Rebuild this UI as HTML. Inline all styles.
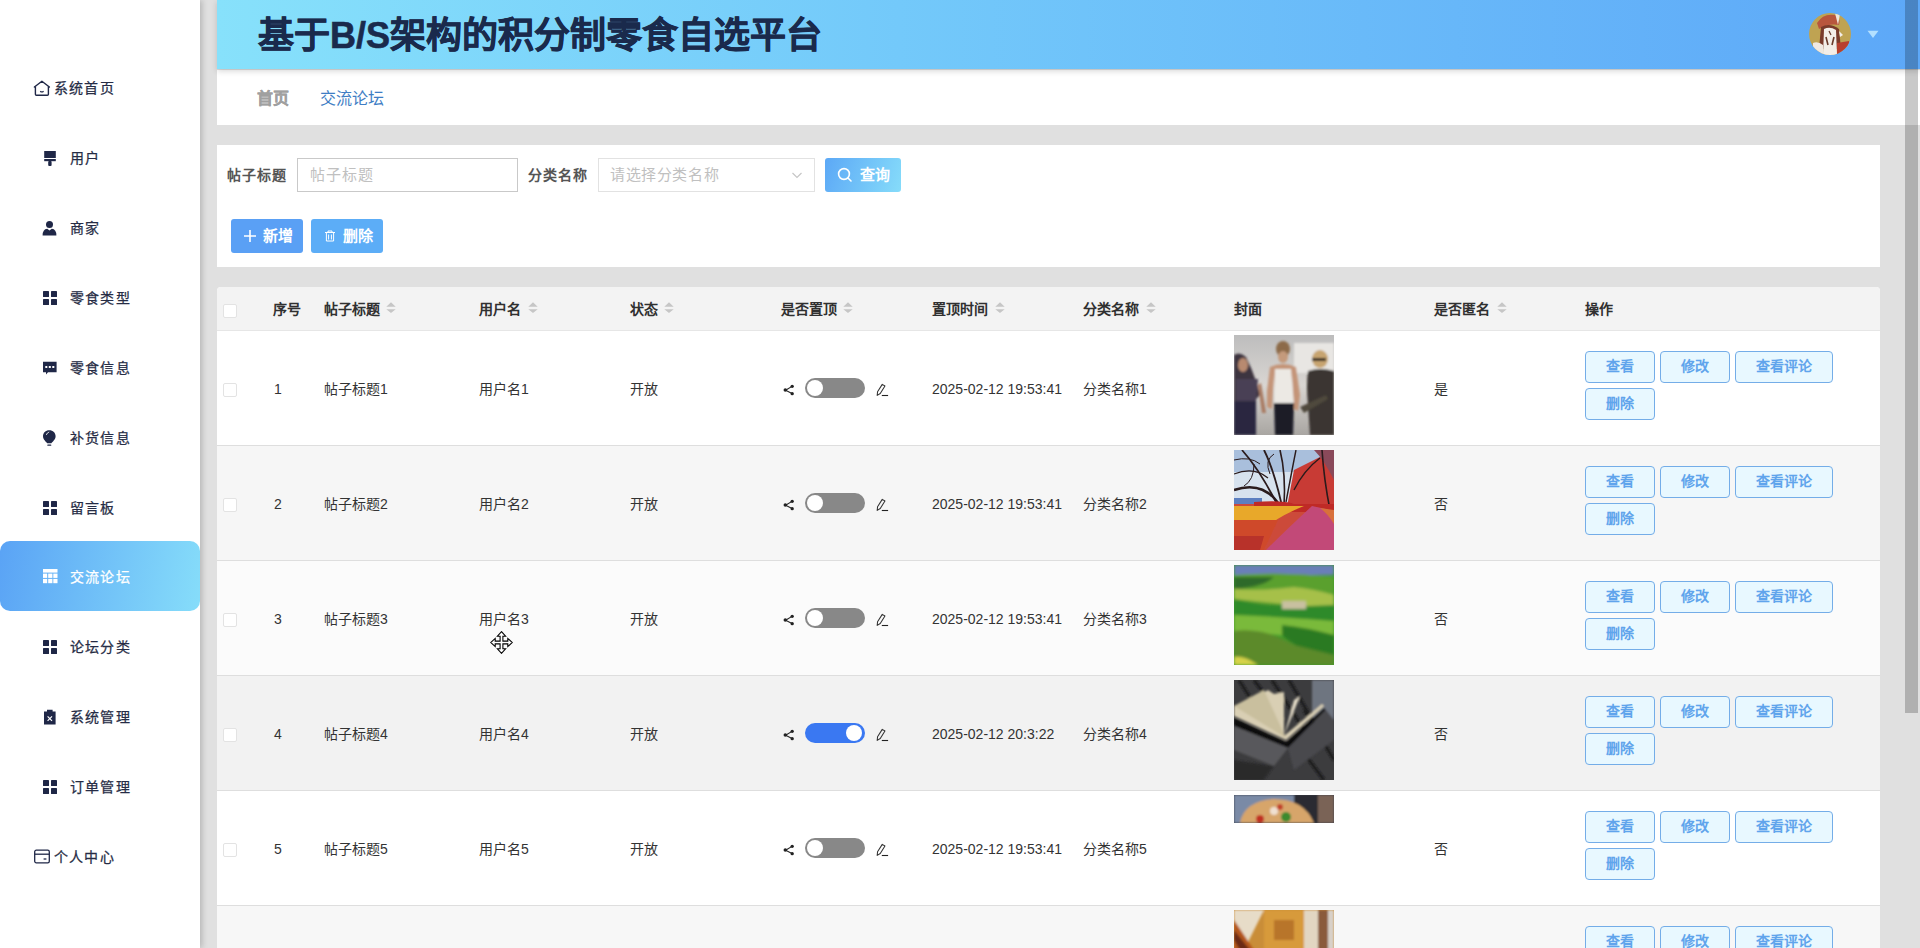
<!DOCTYPE html>
<html lang="zh-CN"><head><meta charset="utf-8">
<style>
*{box-sizing:border-box;margin:0;padding:0}
html,body{width:1920px;height:948px;overflow:hidden}
body{background:#e0e0e0;font-family:"Liberation Sans",sans-serif;position:relative;color:#333}
.abs{position:absolute}
#side{left:0;top:0;width:200px;height:948px;background:#fff;box-shadow:2px 0 6px rgba(0,0,0,.2)}
.mi{position:absolute;left:0;width:200px;height:70px}
.mi .t{position:absolute;left:70px;top:0;line-height:70px;font-size:14px;letter-spacing:1.2px;color:#262c45;white-space:nowrap;-webkit-text-stroke:.25px #262c45}
.mi svg{position:absolute}
.mi.on{background:linear-gradient(100deg,#5aa3f5 0%,#86ddfa 100%);border-radius:10px}
.mi.on .t{color:#fff;-webkit-text-stroke:.25px #fff}
#hdr{left:217px;top:0;width:1703px;height:69px;background:linear-gradient(90deg,#87e1fb 0%,#73c9fa 40%,#5da8f8 100%);box-shadow:0 2px 6px rgba(0,0,0,.17)}
#title{left:258px;top:2px;line-height:68px;font-size:36px;font-weight:bold;color:#1a2a4c;white-space:nowrap;-webkit-text-stroke:.6px #1a2a4c}
#bc{left:217px;top:70px;width:1703px;height:55px;background:#fff}
.panel{background:#fff}
.mi.on .t{top:1px}
.lbl{position:absolute;font-size:14px;letter-spacing:1px;color:#555;font-weight:bold;white-space:nowrap;line-height:20px}
.inp{position:absolute;background:#fff;border:1px solid #c9c9c9;height:34px}
.ph{position:absolute;font-size:15px;letter-spacing:1.1px;color:#c0c0c0;white-space:nowrap;line-height:20px}
.btn{position:absolute;color:#fff;font-size:14px;font-weight:bold;border-radius:3px;white-space:nowrap}
.btn span{position:absolute;line-height:20px}
.th{position:absolute;top:299px;font-size:14px;font-weight:bold;color:#303030;line-height:20px;white-space:nowrap}
.sort{position:absolute;top:302px}
.row{position:absolute;left:217px;width:1663px;height:115px;border-bottom:1px solid #dedede}
.td{position:absolute;font-size:14px;color:#333;line-height:20px;white-space:nowrap;top:48px}
.cb{position:absolute;left:6px;width:14px;height:14px;border:1px solid #e3e3e3;border-radius:2px;background:#fff}
.ob{position:absolute;height:32px;border:1px solid #74ade8;border-radius:4px;background:#e8f8ff;color:#60a4ec;font-size:14px;font-weight:bold;text-align:center;line-height:29px;white-space:nowrap}
.sw{position:absolute;left:588px;top:47px;width:60px;height:20px;border-radius:10px;background:#888}
.sw i{position:absolute;left:2px;top:2px;width:16px;height:16px;border-radius:50%;background:#fff}
.sw.onn{background:#3a78f2}
.sw.onn i{left:41px}
.img{position:absolute;left:1017px;top:4px;width:100px;height:100px;overflow:hidden}


</style></head><body>
<div id="side" class="abs">
<div class="mi" style="top:53px"><svg style="left:32px;top:27px" width="20" height="20" viewBox="0 0 20 20"><path d="M2.4 7 L9.9 1.2 L17.4 7" fill="none" stroke="#1f2747" stroke-width="1.4" stroke-linejoin="round" stroke-linecap="round"/><path d="M3.4 6.4 V14.2 Q3.4 15.2 4.4 15.2 H15.4 Q16.4 15.2 16.4 14.2 V6.4" fill="none" stroke="#1f2747" stroke-width="1.4"/><path d="M8.2 11.2 Q9.9 12.6 11.6 11.2" fill="none" stroke="#1f2747" stroke-width="1.2"/></svg><span class="t" style="left:54px">系统首页</span></div>
<div class="mi" style="top:123px"><svg style="left:44px;top:28px" width="12" height="16" viewBox="0 0 12 16"><rect x="0.2" y="0" width="11.6" height="7" fill="#1f2747"/><rect x="0.2" y="8" width="11.6" height="2.2" fill="#1f2747"/><rect x="4.2" y="10" width="3.4" height="5" rx="1" fill="#1f2747"/></svg><span class="t" style="left:70px">用户</span></div>
<div class="mi" style="top:193px"><svg style="left:42px;top:28px" width="15" height="15" viewBox="0 0 15 15"><circle cx="7.5" cy="3.6" r="3.5" fill="#1f2747"/><path d="M0.6 14.6 Q0.6 8.2 5.2 7.8 L7.5 9.4 L9.8 7.8 Q14.4 8.2 14.4 14.6 Z" fill="#1f2747"/></svg><span class="t" style="left:70px">商家</span></div>
<div class="mi" style="top:263px"><svg style="left:43px;top:28px" width="14" height="14" viewBox="0 0 14 14" fill="#1f2747"><rect x="0" y="0" width="6" height="6" rx=".6"/><rect x="8" y="0" width="6" height="6" rx=".6"/><rect x="0" y="8" width="6" height="6" rx=".6"/><rect x="8" y="8" width="6" height="6" rx=".6"/></svg><span class="t" style="left:70px">零食类型</span></div>
<div class="mi" style="top:333px"><svg style="left:43px;top:28px" width="14" height="14" viewBox="0 0 14 14"><path d="M0 0.8 H13.6 V11.2 H5 L3 13.4 V11.2 H0 Z" fill="#1f2747"/><rect x="2.3" y="5" width="2" height="2" fill="#fff"/><rect x="5.8" y="5" width="2" height="2" fill="#fff"/><rect x="9.3" y="5" width="2" height="2" fill="#fff"/></svg><span class="t" style="left:70px">零食信息</span></div>
<div class="mi" style="top:403px"><svg style="left:43px;top:27px" width="13" height="16" viewBox="0 0 13 16"><path d="M6.3 0.2 C10 0.2 12.6 2.8 12.6 6.2 C12.6 9.4 9.6 11.6 8.4 13.2 H4.2 C3 11.6 0 9.4 0 6.2 C0 2.8 2.6 0.2 6.3 0.2 Z" fill="#1f2747"/><path d="M3.3 5 Q4 2.6 6.2 2" fill="none" stroke="#fff" stroke-width=".8"/><rect x="4.3" y="14.4" width="4" height="1.4" rx=".6" fill="#1f2747"/></svg><span class="t" style="left:70px">补货信息</span></div>
<div class="mi" style="top:473px"><svg style="left:43px;top:28px" width="14" height="14" viewBox="0 0 14 14" fill="#1f2747"><rect x="0" y="0" width="6" height="6" rx=".6"/><rect x="8" y="0" width="6" height="6" rx=".6"/><rect x="0" y="8" width="6" height="6" rx=".6"/><rect x="8" y="8" width="6" height="6" rx=".6"/></svg><span class="t" style="left:70px">留言板</span></div>
<div class="mi on" style="top:541px;padding-top:1px"><svg style="left:43px;top:28px" width="15" height="15" viewBox="0 0 15 15" fill="#fff"><rect x="0" y="0" width="14.5" height="3.6"/><rect x="0" y="4.6" width="4.2" height="4.3"/><rect x="5.2" y="4.6" width="4.2" height="4.3"/><rect x="10.3" y="4.6" width="4.2" height="4.3"/><rect x="0" y="9.9" width="4.2" height="4.3"/><rect x="5.2" y="9.9" width="4.2" height="4.3"/><rect x="10.3" y="9.9" width="4.2" height="4.3"/></svg><span class="t" style="left:70px">交流论坛</span></div>
<div class="mi" style="top:612px"><svg style="left:43px;top:28px" width="14" height="14" viewBox="0 0 14 14" fill="#1f2747"><rect x="0" y="0" width="6" height="6" rx=".6"/><rect x="8" y="0" width="6" height="6" rx=".6"/><rect x="0" y="8" width="6" height="6" rx=".6"/><rect x="8" y="8" width="6" height="6" rx=".6"/></svg><span class="t" style="left:70px">论坛分类</span></div>
<div class="mi" style="top:682px"><svg style="left:43px;top:27px" width="14" height="16" viewBox="0 0 14 16"><path d="M1 2.4 H4 V0.8 H9.6 V2.4 H12.6 V15.4 H1 Z" fill="#1f2747"/><path d="M4.6 7.4 L9 11.8 M9 7.4 L4.6 11.8" stroke="#fff" stroke-width="1.2"/></svg><span class="t" style="left:70px">系统管理</span></div>
<div class="mi" style="top:752px"><svg style="left:43px;top:28px" width="14" height="14" viewBox="0 0 14 14" fill="#1f2747"><rect x="0" y="0" width="6" height="6" rx=".6"/><rect x="8" y="0" width="6" height="6" rx=".6"/><rect x="0" y="8" width="6" height="6" rx=".6"/><rect x="8" y="8" width="6" height="6" rx=".6"/></svg><span class="t" style="left:70px">订单管理</span></div>
<div class="mi" style="top:822px"><svg style="left:32px;top:26px" width="19" height="17" viewBox="0 0 19 17"><rect x="2.7" y="2.2" width="14.6" height="12.6" rx="1.6" fill="none" stroke="#1f2747" stroke-width="1.3"/><path d="M2.7 6.2 H17.3" stroke="#1f2747" stroke-width="1.3"/><path d="M11.6 11 H14.4" stroke="#1f2747" stroke-width="1.3"/></svg><span class="t" style="left:54px">个人中心</span></div>
</div>
<div id="bc" class="abs"></div>
<div id="hdr" class="abs"></div>
<div id="title" class="abs">基于B/S架构的积分制零食自选平台</div>
<div class="abs panel" style="left:217px;top:145px;width:1663px;height:122px"></div>
<div class="abs panel" style="left:217px;top:287px;width:1663px;height:661px;border-radius:4px 4px 0 0"></div>
<div class="abs" style="left:217px;top:287px;width:1663px;height:44px;background:#f3f3f3;border-bottom:1px solid #e6e6e6;border-radius:4px 4px 0 0"></div>
<div class="cb" style="left:223px;top:304px"></div>
<div class="th" style="left:273px">序号</div>
<div class="th" style="left:324px">帖子标题</div>
<svg class="sort" style="left:386px" width="10" height="14" viewBox="0 0 10 14"><path d="M5 0.3 L9.7 4.7 H0.3 Z M5 10.9 L9.7 7.2 H0.3 Z" fill="#c6c6c6"/></svg>
<div class="th" style="left:479px">用户名</div>
<svg class="sort" style="left:528px" width="10" height="14" viewBox="0 0 10 14"><path d="M5 0.3 L9.7 4.7 H0.3 Z M5 10.9 L9.7 7.2 H0.3 Z" fill="#c6c6c6"/></svg>
<div class="th" style="left:630px">状态</div>
<svg class="sort" style="left:664px" width="10" height="14" viewBox="0 0 10 14"><path d="M5 0.3 L9.7 4.7 H0.3 Z M5 10.9 L9.7 7.2 H0.3 Z" fill="#c6c6c6"/></svg>
<div class="th" style="left:781px">是否置顶</div>
<svg class="sort" style="left:843px" width="10" height="14" viewBox="0 0 10 14"><path d="M5 0.3 L9.7 4.7 H0.3 Z M5 10.9 L9.7 7.2 H0.3 Z" fill="#c6c6c6"/></svg>
<div class="th" style="left:932px">置顶时间</div>
<svg class="sort" style="left:995px" width="10" height="14" viewBox="0 0 10 14"><path d="M5 0.3 L9.7 4.7 H0.3 Z M5 10.9 L9.7 7.2 H0.3 Z" fill="#c6c6c6"/></svg>
<div class="th" style="left:1083px">分类名称</div>
<svg class="sort" style="left:1146px" width="10" height="14" viewBox="0 0 10 14"><path d="M5 0.3 L9.7 4.7 H0.3 Z M5 10.9 L9.7 7.2 H0.3 Z" fill="#c6c6c6"/></svg>
<div class="th" style="left:1234px">封面</div>
<div class="th" style="left:1434px">是否匿名</div>
<svg class="sort" style="left:1497px" width="10" height="14" viewBox="0 0 10 14"><path d="M5 0.3 L9.7 4.7 H0.3 Z M5 10.9 L9.7 7.2 H0.3 Z" fill="#c6c6c6"/></svg>
<div class="th" style="left:1585px">操作</div>
<div class="row" style="top:331px;background:#ffffff"><div class="cb" style="top:52px"></div><div class="td" style="left:57px">1</div><div class="td" style="left:107px">帖子标题1</div><div class="td" style="left:262px">用户名1</div><div class="td" style="left:413px">开放</div><svg class="abs" style="left:566px;top:53px" width="12" height="12" viewBox="0 0 12 12"><path d="M9 2.4 L2.6 6.2 L9 9.6" fill="none" stroke="#222" stroke-width="1.1"/><circle cx="9.2" cy="2.3" r="1.65" fill="#222"/><circle cx="2.3" cy="6.1" r="1.75" fill="#222"/><circle cx="9.2" cy="9.7" r="1.65" fill="#222"/></svg><div class="sw"><i></i></div><svg class="abs" style="left:659px;top:52px" width="13" height="14" viewBox="0 0 13 14"><path d="M6.25 1.35 L8.95 3.05 L4.25 10.45 L1.2 12.4 L1.55 8.75 Z" fill="none" stroke="#333" stroke-width="1.05" stroke-linejoin="round"/><path d="M5.8 12.5 H12.1" stroke="#222" stroke-width="1.1"/></svg><div class="td" style="left:715px">2025-02-12 19:53:41</div><div class="td" style="left:866px">分类名称1</div><div class="img" id="img1"><svg width="100" height="100" viewBox="0 0 100 100"><defs><filter id="b1" x="-10%" y="-10%" width="120%" height="120%"><feGaussianBlur stdDeviation="1.2"/></filter>
<linearGradient id="g1" x1="0" y1="0" x2="0" y2="1"><stop offset="0" stop-color="#bdbdbd"/><stop offset=".5" stop-color="#d9d6d2"/><stop offset="1" stop-color="#a9a6a2"/></linearGradient></defs>
<rect width="100" height="100" fill="url(#g1)"/>
<g filter="url(#b1)">
<rect x="60" y="8" width="40" height="30" fill="#e8e6e3"/>
<path d="M0 20 Q6 16 12 22 Q18 34 22 46 L26 60 L22 64 L20 100 L0 100 Z" fill="#3e3540"/>
<ellipse cx="9" cy="30" rx="5" ry="7" fill="#b88a70"/>
<path d="M2 44 H24 L22 66 H2 Z" fill="#4a4155"/>
<path d="M0 66 H22 V100 H0 Z" fill="#2a2540"/>
<path d="M24 50 L28 78 L32 78 L27 48 Z" fill="#a97a62"/>
<ellipse cx="49" cy="14" rx="7" ry="8" fill="#8c6a48"/>
<ellipse cx="49" cy="22" rx="5" ry="6" fill="#c49a7c"/>
<path d="M36 32 Q49 26 62 32 L66 60 L64 76 L60 74 L58 40 L56 70 H42 L40 40 L38 74 L33 72 L33 56 Z" fill="#c49478"/>
<path d="M41 34 H57 L60 70 H40 Z" fill="#ece9e4"/>
<path d="M40 68 H60 L59 100 H41 Z" fill="#1e1e26"/>
<ellipse cx="86" cy="24" rx="8" ry="9" fill="#c7a470"/>
<rect x="78" y="23" width="14" height="3" fill="#222"/>
<path d="M74 36 Q86 32 100 36 V100 H76 L74 70 Q72 50 74 36 Z" fill="#3a3530"/>
<path d="M66 72 L92 60 L94 64 L70 78 Z" fill="#504a3e"/>
</g></svg></div><div class="td" style="left:1217px">是</div><div class="ob" style="left:1368px;top:20px;width:70px">查看</div><div class="ob" style="left:1443px;top:20px;width:70px">修改</div><div class="ob" style="left:1518px;top:20px;width:98px">查看评论</div><div class="ob" style="left:1368px;top:57px;width:70px">删除</div></div>
<div class="row" style="top:446px;background:#f6f6f6"><div class="cb" style="top:52px"></div><div class="td" style="left:57px">2</div><div class="td" style="left:107px">帖子标题2</div><div class="td" style="left:262px">用户名2</div><div class="td" style="left:413px">开放</div><svg class="abs" style="left:566px;top:53px" width="12" height="12" viewBox="0 0 12 12"><path d="M9 2.4 L2.6 6.2 L9 9.6" fill="none" stroke="#222" stroke-width="1.1"/><circle cx="9.2" cy="2.3" r="1.65" fill="#222"/><circle cx="2.3" cy="6.1" r="1.75" fill="#222"/><circle cx="9.2" cy="9.7" r="1.65" fill="#222"/></svg><div class="sw"><i></i></div><svg class="abs" style="left:659px;top:52px" width="13" height="14" viewBox="0 0 13 14"><path d="M6.25 1.35 L8.95 3.05 L4.25 10.45 L1.2 12.4 L1.55 8.75 Z" fill="none" stroke="#333" stroke-width="1.05" stroke-linejoin="round"/><path d="M5.8 12.5 H12.1" stroke="#222" stroke-width="1.1"/></svg><div class="td" style="left:715px">2025-02-12 19:53:41</div><div class="td" style="left:866px">分类名称2</div><div class="img" id="img2"><svg width="100" height="100" viewBox="0 0 100 100"><defs><filter id="b2"><feGaussianBlur stdDeviation=".6"/></filter></defs>
<rect width="100" height="100" fill="#d7e2ee"/><rect y="54" width="100" height="46" fill="#cc4a3a"/>
<g filter="url(#b2)">
<rect x="0" y="0" width="100" height="22" fill="#a9bfdc"/>
<path d="M60 20 Q80 10 100 0 V62 H52 Z" fill="#c83a34"/>
<path d="M80 0 H100 V30 Q90 10 80 0 Z" fill="#8a4a5a"/>
<g stroke="#2a1a1c" fill="none">
<path d="M46 56 Q30 30 0 40" stroke-width="2.4"/>
<path d="M44 56 Q26 20 8 0" stroke-width="1.8"/>
<path d="M48 56 Q40 20 30 0" stroke-width="1.8"/>
<path d="M50 56 Q52 24 46 0" stroke-width="1.6"/>
<path d="M52 52 Q58 20 62 0" stroke-width="1.4"/>
<path d="M0 24 Q20 16 34 28" stroke-width="1.2"/>
<path d="M0 10 Q16 6 26 14" stroke-width="1"/>
<path d="M10 36 Q20 30 20 14" stroke-width="1"/>
<path d="M36 24 Q30 10 40 4" stroke-width="1"/>
<path d="M60 40 Q70 20 86 8" stroke-width="1.4"/>
<path d="M88 0 Q90 30 96 60" stroke-width="1.6"/>
</g>
<rect x="0" y="48" width="28" height="6" fill="#5b7fc0"/>
<path d="M20 52 Q50 50 60 54 L100 54 V62 H20 Z" fill="#bf2a26"/>
<path d="M0 56 H70 Q50 64 36 74 H0 Z" fill="#e8a82c"/>
<path d="M0 70 H44 L30 100 H0 Z" fill="#cf4a2a"/>
<path d="M0 86 H30 L26 100 H0 Z" fill="#b8302a"/>
<path d="M78 56 Q90 58 100 62 V100 H32 Q52 80 78 56 Z" fill="#c24a78"/>
<path d="M86 58 L100 60 V74 Q94 64 86 58 Z" fill="#d8703a"/>
</g></svg></div><div class="td" style="left:1217px">否</div><div class="ob" style="left:1368px;top:20px;width:70px">查看</div><div class="ob" style="left:1443px;top:20px;width:70px">修改</div><div class="ob" style="left:1518px;top:20px;width:98px">查看评论</div><div class="ob" style="left:1368px;top:57px;width:70px">删除</div></div>
<div class="row" style="top:561px;background:#fbfbfb"><div class="cb" style="top:52px"></div><div class="td" style="left:57px">3</div><div class="td" style="left:107px">帖子标题3</div><div class="td" style="left:262px">用户名3</div><div class="td" style="left:413px">开放</div><svg class="abs" style="left:566px;top:53px" width="12" height="12" viewBox="0 0 12 12"><path d="M9 2.4 L2.6 6.2 L9 9.6" fill="none" stroke="#222" stroke-width="1.1"/><circle cx="9.2" cy="2.3" r="1.65" fill="#222"/><circle cx="2.3" cy="6.1" r="1.75" fill="#222"/><circle cx="9.2" cy="9.7" r="1.65" fill="#222"/></svg><div class="sw"><i></i></div><svg class="abs" style="left:659px;top:52px" width="13" height="14" viewBox="0 0 13 14"><path d="M6.25 1.35 L8.95 3.05 L4.25 10.45 L1.2 12.4 L1.55 8.75 Z" fill="none" stroke="#333" stroke-width="1.05" stroke-linejoin="round"/><path d="M5.8 12.5 H12.1" stroke="#222" stroke-width="1.1"/></svg><div class="td" style="left:715px">2025-02-12 19:53:41</div><div class="td" style="left:866px">分类名称3</div><div class="img" id="img3"><svg width="100" height="100" viewBox="0 0 100 100"><defs><filter id="b3"><feGaussianBlur stdDeviation="1.5"/></filter></defs>
<rect width="100" height="100" fill="#3f9a2a"/>
<g filter="url(#b3)">
<rect x="0" y="0" width="100" height="10" fill="#6a7fb8"/>
<path d="M0 10 Q50 6 100 12 V40 H0 Z" fill="#5aa02e"/>
<path d="M0 12 H40 Q30 22 0 24 Z" fill="#2d6b2a"/>
<path d="M0 24 Q30 26 60 22 Q80 24 100 30 V44 Q60 40 0 34 Z" fill="#a6c04a"/>
<path d="M0 34 Q40 44 100 40 V60 Q50 50 0 50 Z" fill="#2f8a2a"/>
<path d="M48 36 H72 V44 H48 Z" fill="#c8c0a0"/>
<path d="M0 50 Q50 52 100 56 V80 Q60 70 0 66 Z" fill="#7aba3a"/>
<path d="M48 60 Q70 62 100 70 V92 Q70 90 48 70 Z" fill="#2a7a22"/>
<path d="M0 66 Q30 62 60 80 L100 90 V100 H0 Z" fill="#5c8a2a"/>
<path d="M0 92 Q10 90 24 100 H0 Z" fill="#d6d24a"/>
</g></svg></div><div class="td" style="left:1217px">否</div><div class="ob" style="left:1368px;top:20px;width:70px">查看</div><div class="ob" style="left:1443px;top:20px;width:70px">修改</div><div class="ob" style="left:1518px;top:20px;width:98px">查看评论</div><div class="ob" style="left:1368px;top:57px;width:70px">删除</div></div>
<div class="row" style="top:676px;background:#f2f2f2"><div class="cb" style="top:52px"></div><div class="td" style="left:57px">4</div><div class="td" style="left:107px">帖子标题4</div><div class="td" style="left:262px">用户名4</div><div class="td" style="left:413px">开放</div><svg class="abs" style="left:566px;top:53px" width="12" height="12" viewBox="0 0 12 12"><path d="M9 2.4 L2.6 6.2 L9 9.6" fill="none" stroke="#222" stroke-width="1.1"/><circle cx="9.2" cy="2.3" r="1.65" fill="#222"/><circle cx="2.3" cy="6.1" r="1.75" fill="#222"/><circle cx="9.2" cy="9.7" r="1.65" fill="#222"/></svg><div class="sw onn"><i></i></div><svg class="abs" style="left:659px;top:52px" width="13" height="14" viewBox="0 0 13 14"><path d="M6.25 1.35 L8.95 3.05 L4.25 10.45 L1.2 12.4 L1.55 8.75 Z" fill="none" stroke="#333" stroke-width="1.05" stroke-linejoin="round"/><path d="M5.8 12.5 H12.1" stroke="#222" stroke-width="1.1"/></svg><div class="td" style="left:715px">2025-02-12 20:3:22</div><div class="td" style="left:866px">分类名称4</div><div class="img" id="img4"><svg width="100" height="100" viewBox="0 0 100 100"><defs><filter id="b4"><feGaussianBlur stdDeviation=".8"/></filter></defs>
<rect width="100" height="100" fill="#3c3c3e"/>
<g filter="url(#b4)">
<rect x="78" y="0" width="22" height="50" fill="#6e7480"/>
<path d="M5 0 L30 40 M20 0 L50 40 M38 0 L70 50 M55 0 L90 60 M70 30 L100 80 M60 60 L90 100" stroke="#1a1a1c" stroke-width="3" fill="none"/>
<path d="M0 36 L52 60 L90 26 L88 24 L50 56 L50 12 L40 14 L34 10 L20 18 L0 26 Z" fill="#d9cfb4"/>
<path d="M0 26 L30 10 L52 58 Z" fill="#c9bf9e"/>
<path d="M50 56 L60 20 L66 16 Z" fill="#e4dcc8"/>
<path d="M0 38 L52 62 L90 28 L92 30 L54 68 L0 46 Z" fill="#111"/>
<path d="M0 46 L54 68 L40 86 L0 70 Z" fill="#58585c"/>
<path d="M54 68 L92 30 L100 40 V60 L60 90 Z" fill="#49494d"/>
<path d="M0 80 L40 86 L30 100 H0 Z" fill="#2a2a2c"/>
</g></svg></div><div class="td" style="left:1217px">否</div><div class="ob" style="left:1368px;top:20px;width:70px">查看</div><div class="ob" style="left:1443px;top:20px;width:70px">修改</div><div class="ob" style="left:1518px;top:20px;width:98px">查看评论</div><div class="ob" style="left:1368px;top:57px;width:70px">删除</div></div>
<div class="row" style="top:791px;background:#ffffff"><div class="cb" style="top:52px"></div><div class="td" style="left:57px">5</div><div class="td" style="left:107px">帖子标题5</div><div class="td" style="left:262px">用户名5</div><div class="td" style="left:413px">开放</div><svg class="abs" style="left:566px;top:53px" width="12" height="12" viewBox="0 0 12 12"><path d="M9 2.4 L2.6 6.2 L9 9.6" fill="none" stroke="#222" stroke-width="1.1"/><circle cx="9.2" cy="2.3" r="1.65" fill="#222"/><circle cx="2.3" cy="6.1" r="1.75" fill="#222"/><circle cx="9.2" cy="9.7" r="1.65" fill="#222"/></svg><div class="sw"><i></i></div><svg class="abs" style="left:659px;top:52px" width="13" height="14" viewBox="0 0 13 14"><path d="M6.25 1.35 L8.95 3.05 L4.25 10.45 L1.2 12.4 L1.55 8.75 Z" fill="none" stroke="#333" stroke-width="1.05" stroke-linejoin="round"/><path d="M5.8 12.5 H12.1" stroke="#222" stroke-width="1.1"/></svg><div class="td" style="left:715px">2025-02-12 19:53:41</div><div class="td" style="left:866px">分类名称5</div><div class="img" id="img5"><svg width="100" height="100" viewBox="0 0 100 100"><defs><filter id="b5"><feGaussianBlur stdDeviation=".8"/></filter></defs>
<rect x="0" y="0" width="100" height="28" fill="#3a3f4a"/>
<g filter="url(#b5)">
<rect x="0" y="0" width="60" height="28" fill="#7a8aa6"/>
<rect x="60" y="0" width="24" height="28" fill="#2a2c30"/>
<rect x="84" y="0" width="16" height="28" fill="#7a6356"/>
<path d="M6 28 Q10 6 40 4 Q70 4 80 28 Z" fill="#d7a56a"/>
<circle cx="26" cy="24" r="4" fill="#c02e22"/>
<circle cx="52" cy="22" r="5" fill="#3c8a2e"/>
<circle cx="40" cy="16" r="4" fill="#f0e0d0"/>
<circle cx="46" cy="12" r="3" fill="#c2402a"/>
</g>
<rect x="0" y="28" width="100" height="72" fill="#ffffff"/></svg></div><div class="td" style="left:1217px">否</div><div class="ob" style="left:1368px;top:20px;width:70px">查看</div><div class="ob" style="left:1443px;top:20px;width:70px">修改</div><div class="ob" style="left:1518px;top:20px;width:98px">查看评论</div><div class="ob" style="left:1368px;top:57px;width:70px">删除</div></div>
<div class="row" style="top:906px;background:#f7f7f7"><div class="cb" style="top:52px"></div><div class="td" style="left:57px">6</div><div class="td" style="left:107px">帖子标题6</div><div class="td" style="left:262px">用户名6</div><div class="td" style="left:413px">开放</div><svg class="abs" style="left:566px;top:53px" width="12" height="12" viewBox="0 0 12 12"><path d="M9 2.4 L2.6 6.2 L9 9.6" fill="none" stroke="#222" stroke-width="1.1"/><circle cx="9.2" cy="2.3" r="1.65" fill="#222"/><circle cx="2.3" cy="6.1" r="1.75" fill="#222"/><circle cx="9.2" cy="9.7" r="1.65" fill="#222"/></svg><div class="sw"><i></i></div><svg class="abs" style="left:659px;top:52px" width="13" height="14" viewBox="0 0 13 14"><path d="M6.25 1.35 L8.95 3.05 L4.25 10.45 L1.2 12.4 L1.55 8.75 Z" fill="none" stroke="#333" stroke-width="1.05" stroke-linejoin="round"/><path d="M5.8 12.5 H12.1" stroke="#222" stroke-width="1.1"/></svg><div class="td" style="left:715px">2025-02-12 19:53:41</div><div class="td" style="left:866px">分类名称6</div><div class="img" id="img6"><svg width="100" height="100" viewBox="0 0 100 100"><defs><filter id="b6"><feGaussianBlur stdDeviation="1"/></filter></defs>
<rect width="100" height="100" fill="#c98d38"/>
<g filter="url(#b6)">
<path d="M0 0 H30 L10 40 H0 Z" fill="#e7dcc8"/>
<path d="M0 10 L20 40 H0 Z" fill="#b4561e"/>
<path d="M0 20 L16 40 H6 L0 30 Z" fill="#6a2c14"/>
<rect x="30" y="0" width="40" height="40" fill="#d79a3a"/>
<rect x="40" y="10" width="20" height="20" fill="#b8742c"/>
<rect x="70" y="0" width="14" height="40" fill="#e2d6c2"/>
<rect x="84" y="0" width="10" height="40" fill="#8a5a3a"/>
<rect x="94" y="0" width="6" height="40" fill="#d8d0c8"/>
</g></svg></div><div class="td" style="left:1217px">否</div><div class="ob" style="left:1368px;top:20px;width:70px">查看</div><div class="ob" style="left:1443px;top:20px;width:70px">修改</div><div class="ob" style="left:1518px;top:20px;width:98px">查看评论</div><div class="ob" style="left:1368px;top:57px;width:70px">删除</div></div>

<svg class="abs" style="left:1809px;top:13px" width="42" height="42" viewBox="0 0 42 42"><defs><clipPath id="av"><circle cx="21" cy="21" r="21"/></clipPath><filter id="avb"><feGaussianBlur stdDeviation=".7"/></filter></defs>
<g clip-path="url(#av)"><rect width="42" height="42" fill="#bfa352"/>
<g filter="url(#avb)">
<path d="M8 10 Q14 0 26 2 Q32 6 30 12 Q20 10 10 16 Z" fill="#b8563c"/>
<path d="M26 0 L31 1 L29 12 Z" fill="#efe6da"/>
<path d="M12 14 Q21 9 30 16 L32 36 H10 Z" fill="#7a3a2a"/>
<path d="M15 16 Q21 13 27 17 L28 42 H14 Z" fill="#f4eee8"/>
<path d="M17 24 L19 32 M25 24 L23 32" stroke="#6a3a2a" stroke-width="1.6"/>
<path d="M20 18 L22 22" stroke="#6a3a2a" stroke-width="1.2"/>
<path d="M28 30 L40 28 L40 42 H28 Z" fill="#b8402e"/>
<path d="M4 30 Q9 28 14 32 L14 42 H4 Z" fill="#f0e8e0"/>
<path d="M30 18 L34 22 L31 24 Z" fill="#f4eee8"/>
</g></g></svg>
<svg class="abs" style="left:1867px;top:30px" width="12" height="9" viewBox="0 0 12 9"><path d="M0.5 0.8 H11.5 L6 8 Z" fill="#b3e0ff"/></svg>
<div class="abs" style="left:257px;top:89px;font-size:16px;font-weight:bold;color:#a0a0a0;line-height:20px;white-space:nowrap;-webkit-text-stroke:.3px #a0a0a0">首页</div>
<div class="abs" style="left:320px;top:89px;font-size:16px;color:#3e7dc4;line-height:20px;white-space:nowrap">交流论坛</div>

<div class="lbl" style="left:227px;top:165px">帖子标题</div>
<div class="inp" style="left:297px;top:158px;width:221px"><span class="ph" style="left:12px;top:6px">帖子标题</span></div>
<div class="lbl" style="left:528px;top:165px">分类名称</div>
<div class="inp" style="left:598px;top:158px;width:217px;border-color:#e2e2e2"><span class="ph" style="left:11px;top:6px;letter-spacing:.6px">请选择分类名称</span>
 <svg class="abs" style="left:192px;top:10px" width="12" height="12" viewBox="0 0 12 12"><path d="M1.5 4 L6 8.5 L10.5 4" fill="none" stroke="#c6c6c6" stroke-width="1.2"/></svg></div>
<div class="btn" style="left:825px;top:158px;width:76px;height:34px;background:linear-gradient(110deg,#5ca8f6 0%,#86dcfa 100%)">
 <svg class="abs" style="left:12px;top:9px" width="16" height="16" viewBox="0 0 16 16"><circle cx="7" cy="7" r="5.4" fill="none" stroke="#fff" stroke-width="1.6"/><path d="M11 11 L14 14" stroke="#fff" stroke-width="1.6" stroke-linecap="round"/></svg>
 <span style="left:35px;top:7px;font-size:15px">查询</span></div>
<div class="btn" style="left:231px;top:219px;width:72px;height:34px;background:#5aa0f5">
 <svg class="abs" style="left:12px;top:10px" width="14" height="14" viewBox="0 0 14 14"><path d="M7 1 V13 M1 7 H13" stroke="#fff" stroke-width="1.6"/></svg>
 <span style="left:32px;top:7px;font-size:15px">新增</span></div>
<div class="btn" style="left:311px;top:219px;width:72px;height:34px;background:#5cadf7">
 <svg class="abs" style="left:13px;top:11px" width="12" height="12" viewBox="0 0 12 12"><path d="M1 2.5 H11 M4 2.5 V1 H8 V2.5 M2.4 2.5 V11 H9.6 V2.5 M4.6 4.5 V9.5 M7.4 4.5 V9.5" fill="none" stroke="#fff" stroke-width="1"/></svg>
 <span style="left:32px;top:7px;font-size:15px">删除</span></div>
<svg class="abs" style="left:490px;top:631px" width="23" height="23" viewBox="0 0 23 23"><path d="M11.5 0.7 L15.6 5.2 H12.9 V10.1 H17.8 V7.4 L22.3 11.5 L17.8 15.6 V12.9 H12.9 V17.8 H15.6 L11.5 22.3 L7.4 17.8 H10.1 V12.9 H5.2 V15.6 L0.7 11.5 L5.2 7.4 V10.1 H10.1 V5.2 H7.4 Z" fill="#fff" stroke="#000" stroke-width="1.1" stroke-linejoin="miter"/></svg>
<div class="abs" style="left:1905px;top:0;width:13px;height:713px;background:rgba(0,0,0,.21)"></div>
</body></html>
